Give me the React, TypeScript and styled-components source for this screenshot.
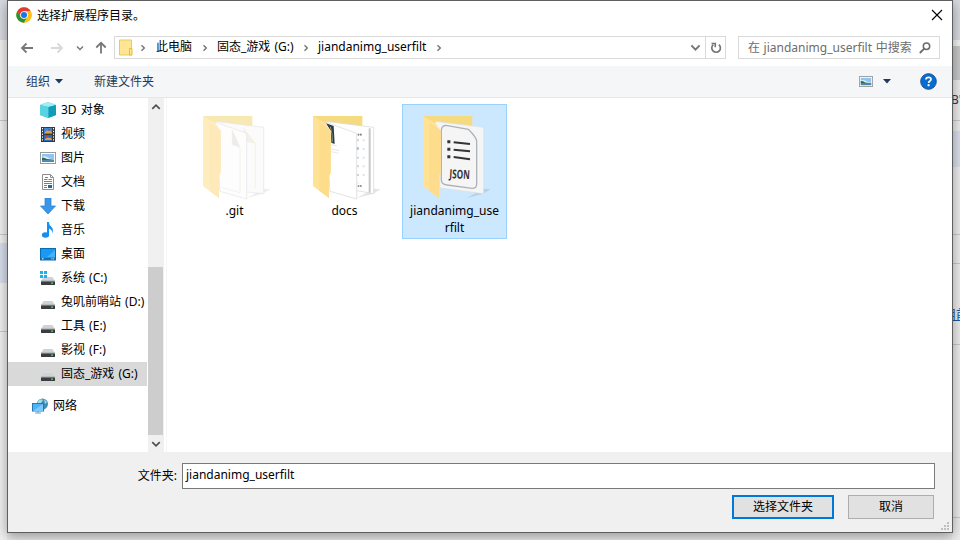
import React from "react";
import styled, { createGlobalStyle, css } from "styled-components";

const Global = createGlobalStyle`
  * { box-sizing: border-box; }
  body { margin: 0; overflow: hidden; font: 12px/16px "Noto Sans", "Noto Sans CJK SC", sans-serif; color: #000; word-spacing: 1px; }
  svg { display: block; flex: none; }
`;

const Screen = styled.div`
  position: relative;
  width: 960px;
  height: 540px;
  overflow: hidden;
  background: #e9e9e9;
  display: flex;
  justify-content: space-between;
`;
const Edge = styled.div<{ $w: number }>`
  width: ${(p) => p.$w}px;
  height: 540px;
  overflow: hidden;
`;
const Band = styled.div<{ $h: number; $bg: string; $line?: boolean }>`
  height: ${(p) => p.$h}px;
  background: ${(p) => p.$bg};
  border-bottom: ${(p) => (p.$line ? "1px solid #c9c9c9" : "0")};
  white-space: nowrap;
`;
const PageText = styled.div`
  margin-left: -1px;
  color: #2c3e62;
  padding-top: 12px;
`;
const PageLink = styled.div`
  margin-left: -9px;
  padding-top: 42px;
  font-size: 13px;
  color: #1a56b0;
  text-decoration: underline;
`;

const Dialog = styled.div`
  position: absolute;
  left: 7px;
  top: 0;
  width: 946px;
  height: 533px;
  border: 1px solid #5e5f61;
  background: #fff;
  box-shadow: 0 3px 12px rgba(0, 0, 0, 0.38);
  display: flex;
  flex-direction: column;
`;
const TitleBar = styled.div`
  height: 28px;
  display: flex;
  align-items: center;
  padding: 0 9px 0 8px;
  gap: 5px;
`;
const Title = styled.div`
  flex: 1;
  padding-top: 1px;
`;
const NavBar = styled.div`
  height: 37px;
  display: flex;
  align-items: center;
  padding: 0 12px 0 12px;
`;
const NavIcons = styled.div`
  width: 94px;
  display: flex;
  align-items: center;
`;
const AddressBox = styled.div`
  width: 612px;
  height: 23px;
  border: 1px solid #d9d9d9;
  display: flex;
  align-items: center;
  padding-left: 4px;
`;
const Crumb = styled.span<{ $w: number }>`
  width: ${(p) => p.$w}px;
  white-space: nowrap;
  padding-bottom: 1px;
`;
const AddressEnd = styled.div`
  margin-left: auto;
  display: flex;
  align-items: center;
  height: 21px;
`;
const Refresh = styled.div`
  width: 20px;
  height: 21px;
  border-left: 1px solid #d9d9d9;
  display: grid;
  place-items: center;
`;
const SearchBox = styled.div`
  width: 202px;
  height: 23px;
  margin-left: 12px;
  border: 1px solid #d9d9d9;
  display: flex;
  align-items: center;
  justify-content: space-between;
  padding: 0 8px 0 9px;
  color: #6d6d6d;
  white-space: nowrap;
  word-spacing: 0.5px;
`;
const CommandBar = styled.div`
  height: 32px;
  background: #f5f6f8;
  border-bottom: 1px solid #e5e7ea;
  display: flex;
  align-items: center;
  padding: 0 15px 0 18px;
  color: #1e395b;
`;
const Command = styled.div`
  display: flex;
  align-items: center;
  gap: 5px;
  margin-right: 31px;
`;
const CommandIcons = styled.div`
  margin-left: auto;
  display: flex;
  align-items: center;
`;
const Gap = styled.span<{ $w: number }>`
  flex: none;
  width: ${(p) => p.$w}px;
`;
const Main = styled.div`
  height: 354px;
  display: flex;
`;
const Tree = styled.div`
  width: 140px;
  overflow: hidden;
`;
const TreeRow = styled.div<{ $selected?: boolean; $root?: boolean }>`
  width: 139px;
  height: 24px;
  margin-top: ${(p) => (p.$root ? 8 : 0)}px;
  padding-left: ${(p) => (p.$root ? 24 : 32)}px;
  background: ${(p) => (p.$selected ? "#d9d9d9" : "transparent")};
  display: flex;
  align-items: center;
  gap: 5px;
  white-space: nowrap;
  & > span { padding-bottom: 1px; }
`;
const ScrollBar = styled.div`
  width: 16px;
  background: #f0f0f0;
  display: flex;
  flex-direction: column;
  align-items: center;
  padding: 4px 1px 3px 0;
  justify-content: space-between;
`;
const Thumb = styled.div`
  width: 15px;
  height: 168px;
  margin-top: 150px;
  align-self: flex-start;
  background: #cdcdcd;
`;
const Files = styled.div`
  display: flex;
  gap: 5px;
  padding: 6px 0 0 15px;
  margin-left: 2px;
  border-left: 1px solid #f6f6f6;
`;
const Tile = styled.div<{ $selected?: boolean }>`
  width: 105px;
  height: 135px;
  border: 1px solid transparent;
  ${(p) => p.$selected && css`background: #cce8ff; border-color: #99d1ff;`}
  display: flex;
  flex-direction: column;
  align-items: center;
`;
const FileName = styled.div`
  width: 91px;
  margin-top: 2px;
  line-height: 17px;
  text-align: center;
  word-break: break-all;
`;
const Footer = styled.div`
  position: relative;
  flex: 1;
  background: #f0f0f0;
  padding: 11px 17px 0 0;
`;
const Field = styled.div`
  display: flex;
  justify-content: flex-end;
  align-items: center;
  gap: 5px;
`;
const Input = styled.div`
  width: 753px;
  height: 26px;
  border: 1px solid #7a7a7a;
  background: #fff;
  padding: 3px 3px;
`;
const Buttons = styled.div`
  display: flex;
  justify-content: flex-end;
  gap: 14px;
  padding: 6px 1px 0 0;
`;
const Button = styled.div<{ $primary?: boolean }>`
  width: ${(p) => (p.$primary ? 102 : 86)}px;
  height: 24px;
  border: ${(p) => (p.$primary ? "2px solid #0078d7" : "1px solid #adadad")};
  background: #e1e1e1;
  display: grid;
  place-items: center;
`;
const Grip = styled.div`
  position: absolute;
  right: 3px;
  bottom: 2px;
`;

const Chrome = () => (
  <svg width="16" height="16" viewBox="0 0 48 48">
    <circle cx="24" cy="24" r="23" fill="#fbc116" />
    <path d="M4 12.500A23 23 0 0 1 44 12.500L24 13 14 30Z" fill="#e33b2e" />
    <path d="M4 12.500A23 23 0 0 0 24 47L34 30 24 35 14 30Z" fill="#229342" />
    <path d="M44 12.500H24L34 30 24 47A23 23 0 0 0 44 12.500Z" fill="#fbc116" />
    <circle cx="24" cy="24" r="11.500" fill="#fff" />
    <circle cx="24" cy="24" r="9" fill="#1a73e8" />
  </svg>
);
const Close = () => (
  <svg width="12" height="12" viewBox="0 0 12 12"><path d="M1 1l10 10M11 1L1 11" stroke="#000" strokeWidth="1.100" /></svg>
);
const Arrow = ({ color, flip }: { color: string; flip?: boolean }) => (
  <svg width="14" height="12" viewBox="0 0 14 12">
    <path d={flip ? "M1 6H12M7.500 1.500L12 6 7.500 10.500" : "M13 6H2M6.500 1.500L2 6l4.500 4.500"} fill="none" stroke={color} strokeWidth="1.800" />
  </svg>
);
const UpArrow = () => (
  <svg width="12" height="13" viewBox="0 0 12 13"><path d="M6 12.500V2M1.300 6.500L6 1.800l4.700 4.700" fill="none" stroke="#777" strokeWidth="1.800" /></svg>
);
const Chevron = ({ dir, w = 8, color = "#757575" }: { dir: "down" | "up" | "right"; w?: number; color?: string }) => {
  const d = { down: "M1 2.500l3 3 3-3", up: "M1 5.500l3-3 3 3", right: "M2.500 1.200L5.300 4 2.500 6.800" }[dir];
  return <svg width={w} height={w} viewBox="0 0 8 8"><path d={d} fill="none" stroke={color} strokeWidth="1.400" /></svg>;
};
const Caret = () => (
  <svg width="8" height="5" viewBox="0 0 8 5"><path d="M0 0H8L4 4.500Z" fill="#1e395b" /></svg>
);
const SmallFolder = () => (
  <svg width="14" height="17" viewBox="0 0 14 17">
    <path d="M.500 1H12.500V16H.500Z" fill="#ffe694" stroke="#efc75e" />
    <path d="M10.500 9.500H13V16H10.500Z" fill="#ffe694" stroke="#e6b93f" />
  </svg>
);
const RefreshIcon = () => (
  <svg width="12" height="12" viewBox="0 0 12 12">
    <path d="M8.800 2.600A4.300 4.300 0 1 1 3.300 2.700" fill="none" stroke="#757575" strokeWidth="1.700" />
    <path d="M1.500 1.500H5.300V5.300" fill="none" stroke="#757575" strokeWidth="1.600" />
  </svg>
);
const Magnifier = () => (
  <svg width="12" height="12" viewBox="0 0 12 12">
    <circle cx="7.500" cy="4.300" r="3.200" fill="none" stroke="#6b6b6b" strokeWidth="1.500" />
    <path d="M5.200 6.700L.800 11" stroke="#6b6b6b" strokeWidth="1.800" />
  </svg>
);
const Picture = ({ w = 16, h = 12 }: { w?: number; h?: number }) => (
  <svg width={w} height={h} viewBox="0 0 16 12" preserveAspectRatio="none">
    <rect x=".500" y=".500" width="15" height="11" fill="#fff" stroke="#9a9a9a" />
    <rect x="2" y="2" width="12" height="8" fill="#8cc4f2" />
    <path d="M2 5Q5 3.500 8 5.500T14 7V8H2Z" fill="#d9edf5" />
    <path d="M2 5.500Q5 5.500 7 7L14 7.800V8.500H2Z" fill="#2f6b5a" />
    <rect x="2" y="8.300" width="12" height="1.700" fill="#4c87ad" />
  </svg>
);
const Help = () => (
  <svg width="17" height="17" viewBox="0 0 17 17">
    <circle cx="8.500" cy="8.500" r="7.800" fill="#0a6cce" stroke="#15518f" />
    <path d="M6 6.500Q6 4.300 8.600 4.300T11 6.300Q11 7.400 9.700 8.200 8.600 8.900 8.600 10" fill="none" stroke="#fff" strokeWidth="1.700" />
    <rect x="7.600" y="11.200" width="2" height="2" fill="#fff" />
  </svg>
);

type Kind = "cube" | "video" | "picture" | "doc" | "download" | "music" | "desktop" | "system" | "drive" | "network";

const DriveBody = () => (
  <>
    <path d="M3.500 7H12.500L15 11H1Z" fill="#d0d3d5" />
    <rect x="1" y="11" width="14" height="4" rx=".5" fill="#3b3e40" />
    <rect x="1" y="10.600" width="14" height="1" fill="#999c9e" />
    <rect x="11" y="12.500" width="2" height="1.300" fill="#3fe04b" />
  </>
);
const glyphs: Record<Kind, React.ReactNode> = {
  cube: (
    <>
      <path d="M0 3L8 0l8 3v10l-8 3-8-3Z" fill="#35bfd3" />
      <path d="M0 3L8 0l8 3-7.500 2Z" fill="#a4edf4" />
      <path d="M0 3l8.500 2v11L0 13Z" fill="#57d3e2" />
      <path d="M8.500 5L16 3v10l-7.500 3Z" fill="#119db5" />
    </>
  ),
  video: (
    <>
      <rect x="1" y="1" width="14" height="15" fill="#39393b" />
      <rect x="4" y="2" width="8" height="6" fill="#4284cf" />
      <rect x="4" y="9" width="8" height="6" fill="#286ac6" />
      <path d="M5 6l2-1.500 4 .5 1 2H5ZM5 13l2-1.500 4 .5 1 2H5Z" fill="#d9a53c" />
      <path d="M8 3h2v1.500H8ZM6 10h2v1.500H6Z" fill="#c5453e" />
      <path d="M2.500 2v13M13.500 2v13" stroke="#fff" strokeDasharray="1.300 1.500" />
    </>
  ),
  picture: null,
  doc: (
    <>
      <path d="M2.500.500H10.500L13.500 3.500V15.500H2.500Z" fill="#fff" stroke="#8d8f91" />
      <path d="M10.500.500V3.500H13.500" fill="none" stroke="#8d8f91" />
      <path d="M5 3.500H8M4 5.500H7.500M8.500 5.500H12M4 7.500H12M4 9.500H12M4 11.500H7M4 13.500H7" stroke="#3297c8" />
      <rect x="8" y="11" width="4" height="3" fill="#27688c" />
    </>
  ),
  download: <path d="M5 0H11V8H15.500L8 16 .500 8H5Z" fill="#3a96e8" stroke="#287fcb" strokeWidth=".7" />,
  music: (
    <>
      <ellipse cx="5.500" cy="13" rx="3.600" ry="2.800" fill="#128ff0" />
      <path d="M7 0H8.800Q9 3 11.500 5 14 7.500 12 11.500 12.500 7.500 9 6.500V13H7Z" fill="#128ff0" />
    </>
  ),
  desktop: (
    <>
      <rect x=".500" y="2.500" width="15" height="11.500" fill="#1899f5" stroke="#0a6bb3" />
      <path d="M7 11L15 4v7Z" fill="#45b2fa" />
      <rect x="1" y="12" width="14" height="1.500" fill="#0d6db4" />
      <path d="M2 12.800H3.500M11.500 12.800h1M13.300 12.800h.7" stroke="#fff" />
    </>
  ),
  system: (
    <>
      <DriveBody />
      <path d="M0 1H3V4H0ZM4 1H7V4H4ZM0 5H3V8H0ZM4 5H7V8H4Z" fill="#16b3ee" />
    </>
  ),
  drive: <DriveBody />,
  network: (
    <>
      <circle cx="10.500" cy="6" r="5.500" fill="#408eb5" />
      <path d="M6 3Q9 0 11 2L9 5 6 6ZM12 1l3 3-2 2Z" fill="#a3dbe9" />
      <rect x=".500" y="5.500" width="11" height="7.500" fill="#4cb2fa" stroke="#2677b4" />
      <path d="M1 13L11 6v7Z" fill="#7bcaff" />
      <path d="M3 15H9M6 13v2" stroke="#73a1bd" />
    </>
  ),
};
const TreeIcon = ({ kind }: { kind: Kind }) =>
  kind === "picture" ? <Picture /> : <svg width="16" height="16" viewBox="0 0 16 16">{glyphs[kind]}</svg>;

const FolderShape = ({ faded, children }: { faded?: boolean; children: React.ReactNode }) => (
  <svg width="103" height="95" viewBox="-21 15 309 285">
    <g opacity={faded ? 0.6 : 1}>
      <path d="M170 294L222 266 242 268 218 282Z" fill="#000" opacity=".1" />
      <path d="M39 48H187V250H90Z" fill="#f5da80" />
      {children}
      <path d="M39 48L76 70 92 92V218L87 227V294L39 258Z" fill="#ffe294" />
      <path d="M58 66L92 92V218L87 227V294L58 272Z" fill="#fddc8b" />
    </g>
  </svg>
);
const GitFolder = () => (
  <FolderShape faded>
    <path d="M76 64L221 82V281L90 268Z" fill="#fafafa" stroke="#d5d5d5" strokeWidth="2" />
    <path d="M160 85L194 128 168 124M196 128V264" fill="#e8e8e8" stroke="#efdcab" strokeWidth="2" />
    <path d="M76 66L170 100V297L90 274Z" fill="#fcfcfc" stroke="#d5d5d5" strokeWidth="2" />
    <path d="M127 90L150 142 127 134Z" fill="#e0e0e0" stroke="#eadcb9" />
    <path d="M150 142V278L94 262" fill="none" stroke="#e9e1cd" strokeWidth="2" />
  </FolderShape>
);
const DocsFolder = () => (
  <FolderShape>
    <path d="M76 64L221 82V281L160 270Z" fill="#fff" stroke="#d4d4d4" strokeWidth="2" />
    <path d="M209 85V278" stroke="#c8c8c8" strokeWidth="6" />
    <path d="M173 104h14M173 258h14" stroke="#767676" strokeWidth="5" strokeDasharray="5 2" />
    <path d="M173 118V250" stroke="#d6d6d6" strokeWidth="8" strokeDasharray="6 20" />
    <path d="M191 118V250" stroke="#e3e3e3" strokeWidth="6" strokeDasharray="6 20" />
    <path d="M168 145h8" stroke="#8ebae8" strokeWidth="7" />
    <path d="M76 66L170 100V297L90 274Z" fill="#fff" stroke="#d4d4d4" strokeWidth="2" />
    <path d="M78 70L101 78 104 132 94 128 92 92Z" fill="#333b3e" />
    <path d="M91 80Q98 102 97 125" fill="none" stroke="#7c9a91" strokeWidth="3" />
    <path d="M94 134l16 3M94 147l22 5M94 155l22 5" stroke="#ddd" strokeWidth="2" />
  </FolderShape>
);
const JsonText = styled.text`
  font: 700 37px "Open Sans", "Noto Sans", sans-serif;
  fill: #333;
`;
const JsonFolder = () => (
  <FolderShape>
    <path d="M76 64L221 82V281L90 264Z" fill="#f4f5f6" stroke="#ddd" strokeWidth="2" />
    <path d="M112 77L175 88Q199 112 200 123V252Q200 265 187 265L111 255Q94 253 94 240V92Q94 74 112 77Z" fill="#f5f5f5" stroke="#b0b3b5" strokeWidth="4" />
    <path d="M131 127l49 5M131 149l49 5M131 171l49 7" stroke="#333" strokeWidth="6" />
    <path d="M112 125h9M112 148h9M112 170h9" stroke="#333" strokeWidth="9" />
    <g transform="translate(118 234) rotate(3) scale(.66 1)"><JsonText>JSON</JsonText></g>
  </FolderShape>
);

const tree: { kind: Kind; label: string; selected?: boolean; root?: boolean }[] = [
  { kind: "cube", label: "3D 对象" },
  { kind: "video", label: "视频" },
  { kind: "picture", label: "图片" },
  { kind: "doc", label: "文档" },
  { kind: "download", label: "下载" },
  { kind: "music", label: "音乐" },
  { kind: "desktop", label: "桌面" },
  { kind: "system", label: "系统 (C:)" },
  { kind: "drive", label: "兔叽前哨站 (D:)" },
  { kind: "drive", label: "工具 (E:)" },
  { kind: "drive", label: "影视 (F:)" },
  { kind: "drive", label: "固态_游戏 (G:)", selected: true },
  { kind: "network", label: "网络", root: true },
];
const gripDots = [[6, 0], [3, 3], [6, 3], [0, 6], [3, 6], [6, 6]];

export default function App() {
  return (
    <Screen>
      <Global />
      <Edge $w={7}>
        <Band $h={40} $bg="#d9dbe1" />
        <Band $h={81} $bg="#f1f1f1" $line />
        <Band $h={114} $bg="#f1f1f1" $line />
        <Band $h={8} $bg="#f1f1f1" />
        <Band $h={40} $bg="#d9dfed" />
        <Band $h={49} $bg="#f1f1f1" $line />
        <Band $h={208} $bg="#f1f1f1" />
      </Edge>
      <Edge $w={8}>
        <Band $h={40} $bg="#d9dbe1" />
        <Band $h={6} $bg="#f3f3f3" />
        <Band $h={34} $bg="#cacaca" />
        <Band $h={41} $bg="#eee" $line><PageText>B'</PageText></Band>
        <Band $h={10} $bg="#eee" />
        <Band $h={36} $bg="#dbe0eb" />
        <Band $h={68} $bg="#eee" $line />
        <Band $h={29} $bg="#eee" $line />
        <Band $h={81} $bg="#eee" $line><PageLink>用前</PageLink></Band>
        <Band $h={173} $bg="#eee" $line />
        <Band $h={22} $bg="#eee" />
      </Edge>
      <Dialog>
        <TitleBar>
          <Chrome />
          <Title>选择扩展程序目录。</Title>
          <Close />
        </TitleBar>
        <NavBar>
          <NavIcons>
            <Arrow color="#777" />
            <Gap $w={16} />
            <Arrow color="#d8d8d8" flip />
            <Gap $w={12} />
            <Chevron dir="down" />
            <Gap $w={11} />
            <UpArrow />
          </NavIcons>
          <AddressBox>
            <SmallFolder />
            <Gap $w={6} /><Chevron dir="right" /><Gap $w={9} />
            <Crumb $w={36}>此电脑</Crumb>
            <Gap $w={9} /><Chevron dir="right" /><Gap $w={8} />
            <Crumb $w={77}>固态_游戏 (G:)</Crumb>
            <Gap $w={8} /><Chevron dir="right" /><Gap $w={8} />
            <Crumb $w={109}>jiandanimg_userfilt</Crumb>
            <Gap $w={8} /><Chevron dir="right" />
            <AddressEnd>
              <Chevron dir="down" w={11} />
              <Gap $w={4} />
              <Refresh><RefreshIcon /></Refresh>
            </AddressEnd>
          </AddressBox>
          <SearchBox><span>在 jiandanimg_userfilt 中搜索</span><Magnifier /></SearchBox>
        </NavBar>
        <CommandBar>
          <Command>组织<Caret /></Command>
          <Command>新建文件夹</Command>
          <CommandIcons>
            <Picture w={14} h={11} />
            <Gap $w={10} />
            <Caret />
            <Gap $w={29} />
            <Help />
          </CommandIcons>
        </CommandBar>
        <Main>
          <Tree>
            {tree.map((t) => (
              <TreeRow key={t.label} $selected={t.selected} $root={t.root}>
                <TreeIcon kind={t.kind} />
                <span>{t.label}</span>
              </TreeRow>
            ))}
          </Tree>
          <ScrollBar>
            <Chevron dir="up" w={10} color="#505050" />
            <Thumb />
            <Chevron dir="down" w={10} color="#505050" />
          </ScrollBar>
          <Files>
            <Tile><GitFolder /><FileName>.git</FileName></Tile>
            <Tile><DocsFolder /><FileName>docs</FileName></Tile>
            <Tile $selected><JsonFolder /><FileName>jiandanimg_userfilt</FileName></Tile>
          </Files>
        </Main>
        <Footer>
          <Field>文件夹:<Input>jiandanimg_userfilt</Input></Field>
          <Buttons>
            <Button $primary>选择文件夹</Button>
            <Button>取消</Button>
          </Buttons>
          <Grip>
            <svg width="8" height="8" viewBox="0 0 8 8">
              {gripDots.map(([x, y]) => <rect key={`${x}-${y}`} x={x} y={y} width="2" height="2" fill="#bfbfbf" />)}
            </svg>
          </Grip>
        </Footer>
      </Dialog>
    </Screen>
  );
}
